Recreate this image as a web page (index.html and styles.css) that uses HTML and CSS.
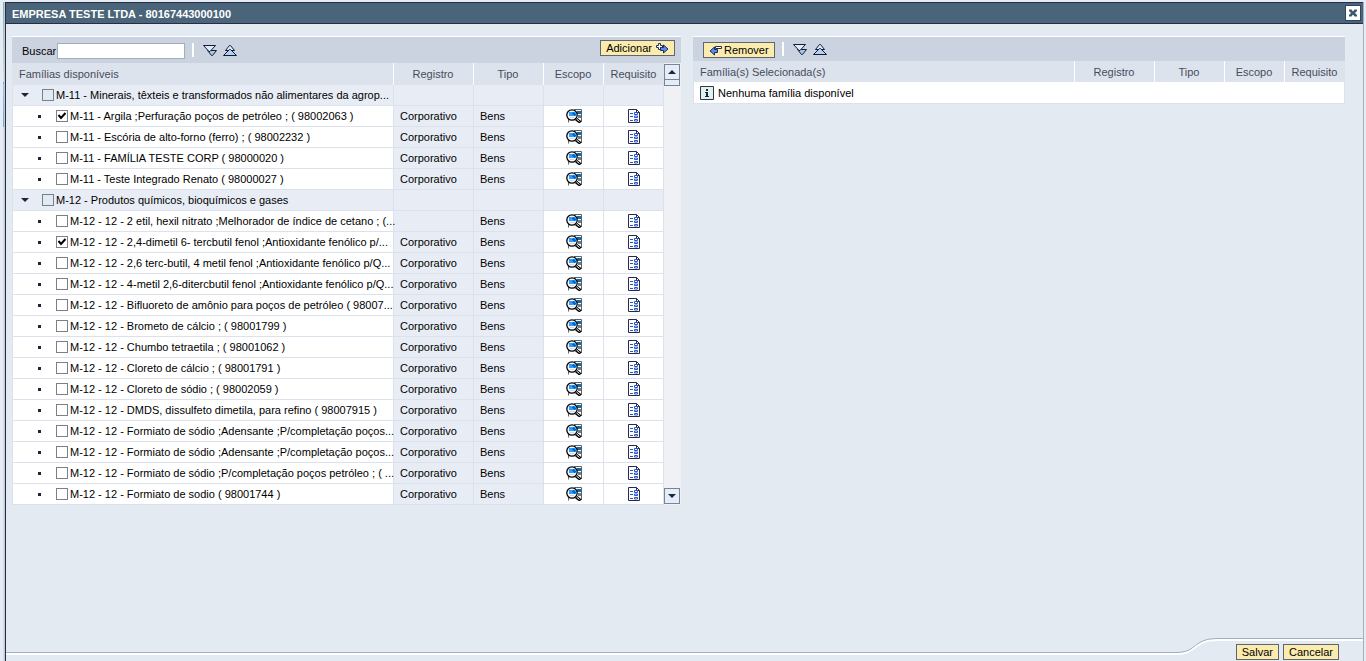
FILE: index.html
```html
<!DOCTYPE html>
<html lang="pt-BR">
<head>
<meta charset="utf-8">
<title>EMPRESA TESTE LTDA</title>
<link rel="stylesheet" href="styles.css">
</head>
<body>
<svg class="sprite" aria-hidden="true">
  <symbol id="i-down" viewBox="0 0 14 13">
    <path d="M4.500 6.500h9l-4 5h-1z" fill="#a9c6ee" stroke="#111b33"/>
    <path d="M.5 1.500h12l-5.500 6h-1z" fill="#dfe9f7" stroke="#111b33"/>
  </symbol>
  <symbol id="i-up" viewBox="0 0 14 13">
    <path d="M2.500 6.500l4-5h1l4 5z" fill="#dfe9f7" stroke="#111b33"/>
    <path d="M.5 11.500l6-6h1l6 6z" fill="#b5cff2" stroke="#111b33"/>
  </symbol>
  <symbol id="i-add" viewBox="0 0 13 11">
    <path d="M2.500.5h2v2h2v2h-2v2h-2v-2h-2v-2h2z" fill="#fff" stroke="#20305a"/>
    <path d="M4.500 4.500h3v-2.500l4.500 4-4.500 4v-2.500h-3z" fill="#5b8eea" stroke="#1c2c66"/>
  </symbol>
  <symbol id="i-remove" viewBox="0 0 13 11">
    <path d="M6.500 1.500h6v2h-6z" fill="#fff" stroke="#20305a"/>
    <path d="M5.500 2v2.500h3v3h-3v2.500l-4.500-4z" fill="#5b8eea" stroke="#1c2c66"/>
  </symbol>
  <symbol id="i-scope" viewBox="0 0 16 14">
    <path d="M6 0h10v14H2v-4z" fill="#fff"/>
    <path d="M8 .5h7.500V13M2.500 10v3.500" fill="none" stroke="#5c6068"/>
    <path d="M11 2h4v3h-4z" fill="#0b6cb4"/><path d="M12 6h3v3h-3z" fill="#5e7f96"/>
    <circle cx="6" cy="6" r="5.200" fill="#f4f8fb" stroke="#000" stroke-width="1.300"/>
    <path d="M3 3h7v4H3z" fill="#2f9bff"/><path d="M7 3h1v1h1v1h1v1H9v1H8V6H7V5H6V4h1z" fill="#0a66b8"/>
    <path d="M4 8h4v1H4z" fill="#d9d3ee"/>
    <path d="M10 10l4.500 3.500" stroke="#000" stroke-width="3"/><path d="M10.500 10l3 2.500" stroke="#fff"/>
  </symbol>
  <symbol id="i-req" viewBox="0 0 12 14">
    <path d="M.5.5h8l3 3v10H.5z" fill="#fff" stroke="#29294b"/>
    <path d="M8.500.5v3h3" fill="none" stroke="#29294b"/>
    <path d="M2 4.500h3M2 7.500h3M2 11.500h3" stroke="#2258c4"/>
    <path d="M6.500 3.500h3v2h-3zM6.500 7h3v1.500h-3zM6.500 10.500h3v1.500h-3z" fill="#fff" stroke="#2258c4"/>
  </symbol>
</svg>
<div class="backdrop"></div>
<main class="dialog">
  <header class="titlebar">
    <h1>EMPRESA TESTE LTDA - 80167443000100</h1>
    <button class="close" aria-label="Fechar"><svg width="10" height="10" viewBox="0 0 10 10"><path d="M1 1.500h2.500L5 3.500l1.500-2H9v1.500L7 5l2 2v1.500H6.500L5 6.500l-1.500 2H1V7l2-2-2-2z" fill="#3d5870"/></svg></button>
  </header>
  <div class="content">
    <section class="panel available">
      <div class="toolbar">
        <label for="q">Buscar</label><input id="q" class="search" type="text">
        <span class="sep"></span>
        <button class="tool" aria-label="Expandir"><svg width="14" height="13"><use href="#i-down"/></svg></button>
        <button class="tool" aria-label="Recolher"><svg width="14" height="13"><use href="#i-up"/></svg></button>
        <button class="btn push">Adicionar <svg width="13" height="11"><use href="#i-add"/></svg></button>
      </div>
      <div class="scrollarea">
        <table class="grid" id="families">
          <colgroup><col><col class="c-reg"><col class="c-tipo"><col class="c-ico"><col class="c-ico"></colgroup>
          <thead><tr><th class="first">Famílias disponíveis</th><th>Registro</th><th>Tipo</th><th>Escopo</th><th>Requisito</th></tr></thead>
          <tbody></tbody>
        </table>
        <div class="scrollbar">
          <button class="arrow" aria-label="Subir"><svg width="8" height="4"><path d="M0 4l4-4 4 4z" fill="#22223c"/></svg></button>
          <span class="thumb"></span>
          <button class="arrow bottom" aria-label="Descer"><svg width="8" height="4"><path d="M0 0h8l-4 4z" fill="#22223c"/></svg></button>
        </div>
      </div>
    </section>
    <section class="panel selected">
      <div class="toolbar">
        <button class="btn remove"><svg width="13" height="11"><use href="#i-remove"/></svg> Remover</button>
        <span class="sep"></span>
        <button class="tool" aria-label="Expandir"><svg width="14" height="13"><use href="#i-down"/></svg></button>
        <button class="tool" aria-label="Recolher"><svg width="14" height="13"><use href="#i-up"/></svg></button>
      </div>
      <table class="grid">
        <colgroup><col><col class="c-reg"><col class="c-tipo"><col class="c-ico"><col class="c-ico"></colgroup>
        <thead><tr><th class="first">Família(s) Selecionada(s)</th><th>Registro</th><th>Tipo</th><th>Escopo</th><th>Requisito</th></tr></thead>
        <tbody><tr><td class="message" colspan="5"><div class="cell"><svg width="14" height="14" viewBox="0 0 14 14"><path d="M.5.5h13v13H.5z" fill="#e0f3ea" stroke="#30354f"/><path d="M6 3h2v2H6zM5 6h3v4h1v1H5v-1h1V7H5z" fill="#202540"/></svg>Nenhuma família disponível</div></td></tr></tbody>
      </table>
    </section>
  </div>
  <footer class="footer">
    <div class="line"></div>
    <svg class="curve" width="42" height="18" viewBox="0 0 42 18"><path d="M0 16C22 16 16 2 42 2" fill="none" stroke="#fff" stroke-width="2"/><path d="M0 14.500C22 14.500 16 .5 42 .5" fill="none" stroke="#a3adbd"/></svg>
    <div class="actions"><button class="btn">Salvar</button><button class="btn">Cancelar</button></div>
  </footer>
</main>
<script src="families.js"></script>
</body>
</html>
```
FILE: families.js
```js
const C = 'Corporativo';
const rows = [
  { group: 'M-11 - Minerais, têxteis e transformados não alimentares da agrop...' },
  { name: 'M-11 - Argila ;Perfuração poços de petróleo ; ( 98002063 )', reg: C, on: true },
  { name: 'M-11 - Escória de alto-forno (ferro) ; ( 98002232 )', reg: C },
  { name: 'M-11 - FAMÍLIA TESTE CORP ( 98000020 )', reg: C },
  { name: 'M-11 - Teste Integrado Renato ( 98000027 )', reg: C },
  { group: 'M-12 - Produtos químicos, bioquímicos e gases' },
  { name: 'M-12 - 12 - 2 etil, hexil nitrato ;Melhorador de índice de cetano ; (...', reg: '' },
  { name: 'M-12 - 12 - 2,4-dimetil 6- tercbutil fenol ;Antioxidante fenólico p/...', reg: C, on: true },
  { name: 'M-12 - 12 - 2,6 terc-butil, 4 metil fenol ;Antioxidante fenólico p/Q...', reg: C },
  { name: 'M-12 - 12 - 4-metil 2,6-ditercbutil fenol ;Antioxidante fenólico p/Q...', reg: C },
  { name: 'M-12 - 12 - Bifluoreto de amônio para poços de petróleo ( 98007...', reg: C },
  { name: 'M-12 - 12 - Brometo de cálcio ; ( 98001799 )', reg: C },
  { name: 'M-12 - 12 - Chumbo tetraetila ; ( 98001062 )', reg: C },
  { name: 'M-12 - 12 - Cloreto de cálcio ; ( 98001791 )', reg: C },
  { name: 'M-12 - 12 - Cloreto de sódio ; ( 98002059 )', reg: C },
  { name: 'M-12 - 12 - DMDS, dissulfeto dimetila, para refino ( 98007915 )', reg: C },
  { name: 'M-12 - 12 - Formiato de sódio ;Adensante ;P/completação poços...', reg: C },
  { name: 'M-12 - 12 - Formiato de sódio ;Adensante ;P/completação poços...', reg: C },
  { name: 'M-12 - 12 - Formiato de sódio ;P/completação poços petróleo ; ( ...', reg: C },
  { name: 'M-12 - 12 - Formiato de sodio ( 98001744 )', reg: C }
];
const icon = (id, w, label) =>
  `<button class="tool" aria-label="${label}"><svg width="${w}" height="14"><use href="#${id}"/></svg></button>`;
document.querySelector('#families tbody').innerHTML = rows.map((r, i) => r.group
  ? `<tr class="group"><td><div class="cell"><span class="caret"></span><input type="checkbox" id="f${i}"><label for="f${i}">${r.group}</label></div></td><td></td><td></td><td></td><td></td></tr>`
  : `<tr><td><div class="cell leaf"><span class="dot"></span><input type="checkbox" id="f${i}"${r.on ? ' checked' : ''}><label for="f${i}">${r.name}</label></div></td><td class="tint">${r.reg}</td><td class="tint">Bens</td><td class="ico">${icon('i-scope', 16, 'Escopo')}</td><td class="ico">${icon('i-req', 12, 'Requisito')}</td></tr>`
).join('');
```
FILE: styles.css
```css
* { box-sizing: border-box; }
body {
  margin: 0;
  min-height: 100vh;
  display: flex;
  padding-top: 2px;
  background: #e6ecf4;
  color: #000;
  font: 11px/14px "Liberation Sans", Arial, sans-serif;
}
button, input { font: inherit; color: inherit; margin: 0; }
button { cursor: pointer; }
svg { display: block; flex: none; }
.sprite { position: absolute; width: 0; height: 0; }
.backdrop {
  width: 5px;
  padding-left: 3px;
  border-right: 1px solid #c2cbd8;
  background: linear-gradient(#7fb4bd 0, #b9d6d0 60px, #dcdfcf 80px, #4a90c8 80px, #9cc5e4 82px, #6fa9d6 125px, #d5dde8 125px) content-box, #e6ecf4;
}
.dialog {
  flex: 1;
  min-width: 0;
  display: flex;
  flex-direction: column;
  margin-right: 2px;
  border-left: 1px solid #2a2c45;
  border-right: 1px solid #a5afc0;
  background: #e3eaf2;
}
.titlebar {
  display: flex;
  align-items: center;
  justify-content: space-between;
  height: 22px;
  padding: 0 2px 0 6px;
  border-top: 1px solid #2a2c45;
  border-bottom: 1px solid #2a2c45;
  background: #4a647a;
}
.titlebar h1 { margin: 0; padding-top: 2px; color: #fff; font-size: 11px; line-height: 14px; }
.close {
  display: flex;
  align-items: center;
  justify-content: center;
  width: 16px;
  height: 16px;
  padding: 0;
  border: 1px solid #2f475c;
  background: #fff;
}
.content {
  flex: 1;
  display: grid;
  grid-template-columns: 669fr 652fr;
  gap: 12px;
  align-items: start;
  padding: 12px 18px 0 6px;
}
.panel { min-width: 0; border-top: 1px solid #fff; }
.toolbar {
  display: flex;
  align-items: center;
  height: 26px;
  padding: 0 6px 0 10px;
  background: #cad3df;
}
.available .toolbar label, .search { margin-top: 2px; }
.selected .toolbar { height: 24px; }
.search {
  width: 128px;
  height: 16px;
  margin-left: 1px;
  padding: 0 2px;
  border: 1px solid #a3aebd;
  background: #fff;
}
.sep { width: 2px; height: 14px; margin: 0 9px 0 7px; background: #fff; }
.tool { display: block; padding: 0; border: 0; background: none; }
.toolbar .tool { margin-right: 6px; }
.btn {
  display: flex;
  align-items: center;
  gap: 4px;
  height: 16px;
  padding: 0 5px;
  border: 1px solid #5f6673;
  background: #fbecae;
  white-space: nowrap;
}
.push { align-self: start; margin: 3px 0 0 auto; }
.remove { gap: 2px; margin-top: 2px; }
.scrollarea { display: flex; background: #dde3ed; }
.grid {
  flex: 1;
  min-width: 0;
  width: 100%;
  table-layout: fixed;
  border-collapse: separate;
  border-spacing: 0;
}
.c-reg { width: 80px; }
.c-tipo { width: 70px; }
.c-ico { width: 60px; }
.grid th {
  height: 22px;
  padding: 0 1px 0 0;
  border-right: 1px solid #fff;
  background: #dde3ed;
  color: #474c5c;
  font-weight: normal;
}
.grid th:last-child { border-right: 0; }
.grid th.first { padding-left: 7px; text-align: left; }
.selected .grid th { height: 21px; }
.grid td {
  height: 21px;
  padding: 0 0 0 6px;
  border-right: 1px solid #dce2ec;
  border-bottom: 1px solid #dce2ec;
  background: #fff;
}
.grid td:first-child { padding: 0; border-left: 1px solid #dce2ec; }
.grid td.message { height: 22px; }
.group td, .grid .tint { background: #e8edf5; }
.grid .ico { padding: 0; }
.ico .tool { margin: 0 auto; }
.cell { display: flex; align-items: center; padding-left: 8px; white-space: nowrap; }
.cell.leaf { padding-left: 25px; }
.grid .message .cell { gap: 4px; padding-left: 6px; }
.caret { flex: none; border: 4px solid transparent; border-top-color: #22223c; border-bottom: 0; margin-right: 13px; }
.dot { flex: none; width: 3px; height: 3px; margin-right: 15px; background: #22223c; }
.cell input {
  appearance: none;
  flex: none;
  width: 12px;
  height: 12px;
  margin-right: 2px;
  border: 1px solid #7d7f86;
  background: #fff;
}
.group .cell input { background: #dfebf4; }
.cell input:checked {
  background: #fff url("data:image/svg+xml,%3Csvg xmlns='http://www.w3.org/2000/svg' viewBox='0 0 10 10'%3E%3Cpath d='M1.500 4l2.500 3 4.500-5' fill='none' stroke='%23000' stroke-width='2'/%3E%3C/svg%3E") center / 10px 10px no-repeat;
}
.scrollbar {
  display: flex;
  flex-direction: column;
  width: 17px;
  flex: none;
  padding: 1px 1px 1px 0;
  background: #f0f1f4;
}
.arrow {
  display: flex;
  align-items: center;
  justify-content: center;
  height: 16px;
  padding: 0;
  border: 1px solid #7d828d;
  background: #e3eefa;
}
.thumb { height: 6px; border: 1px solid #7d828d; border-top: 0; background: #e3eefa; }
.bottom { margin-top: auto; }
.footer { display: flex; align-items: start; height: 23px; }
.line { flex: 1; height: 17px; border-bottom: 2px solid #fff; box-shadow: inset 0 -1px #a3adbd; }
.actions {
  display: flex;
  gap: 4px;
  padding: 5px 24px 0 18px;
  border-top: 1px solid #a3adbd;
  box-shadow: inset 0 2px #fff;
}
```
